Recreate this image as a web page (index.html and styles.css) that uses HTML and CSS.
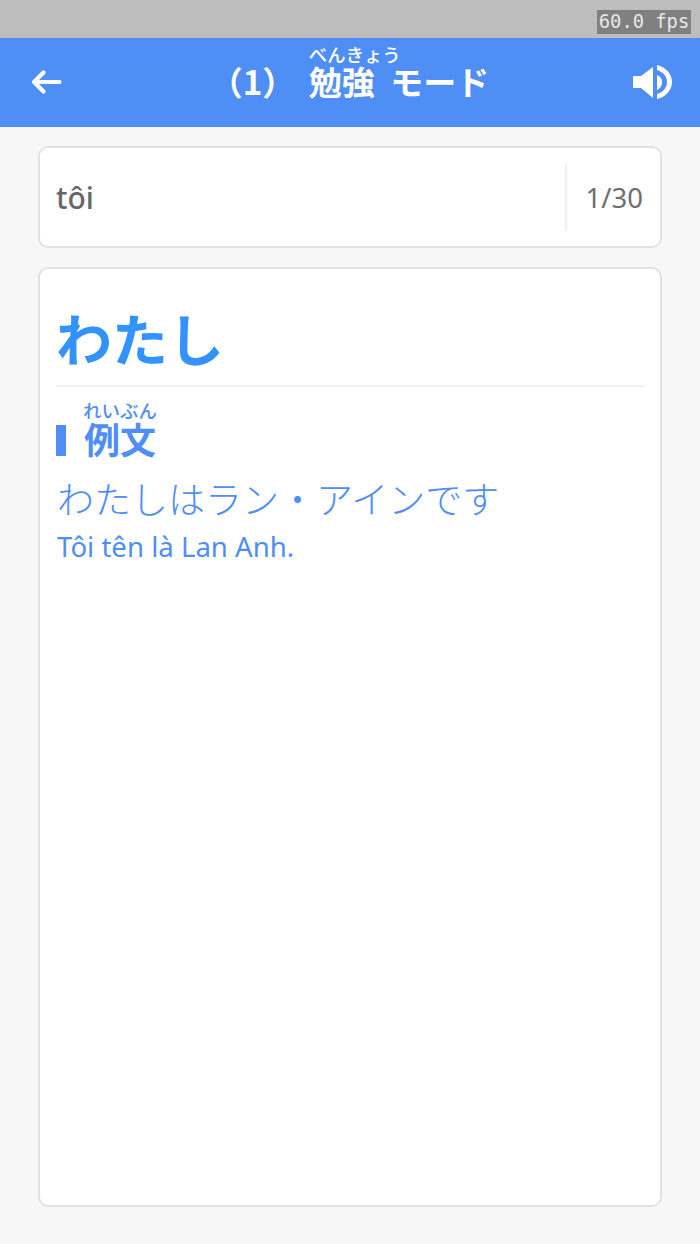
FILE: index.html
```html
<!DOCTYPE html>
<html lang="ja">
<head>
  <meta charset="UTF-8">
  <meta name="viewport" content="width=device-width, initial-scale=1.0">
  <title>勉強モード</title>
  <link rel="stylesheet" href="styles.css">
</head>
<body>

  <div class="status-bar">
    <span class="fps">60.0 fps</span>
  </div>

  <header class="header">
    <svg class="icon-back" width="31" height="26" viewBox="0 0 31 26">
      <path d="M12.5 3.5 L3 13 L12.5 22.5 M3 13 H28.5" fill="none" stroke="#fff" stroke-width="4.2" stroke-linecap="round" stroke-linejoin="round"/>
    </svg>
    <h1 class="title">（1） <ruby class="furi">勉強<rt>べんきょう</rt></ruby> モード</h1>
    <svg class="icon-sound" width="39" height="34" viewBox="0 0 39 34">
      <path d="M0 11 H8 L20 2 V33 L8 23 H0 Z" fill="#fff"/>
      <path d="M24 10 C28 12 29 14 29 17 C29 20 28 23 24 25 Z" fill="#fff"/>
      <path d="M24 0 C33 2 39 9 39 17 C39 25 33 32 24 34 V29 C30 27 34 23 34 17 C34 11 30 7 24 5 Z" fill="#fff"/>
    </svg>
  </header>

  <main class="content">
    <section class="word-card">
      <div class="word">tôi</div>
      <div class="counter">1/30</div>
    </section>

    <section class="detail-card">
      <h2 class="kana">わたし</h2>
      <h3 class="section-title"><ruby class="furi">例文<rt>れいぶん</rt></ruby></h3>
      <p class="sentence">わたしはラン・アインです</p>
      <p class="translation">Tôi tên là Lan Anh.</p>
    </section>
  </main>

</body>
</html>
```

FILE: styles.css
```css
* {
  box-sizing: border-box;
}

body {
  font-family: "Noto Sans", "Noto Sans CJK JP", sans-serif;
  background-color: #f7f7f7;
  margin: 0;
  height: 1244px;
  display: flex;
  flex-direction: column;
  overflow: hidden;
}

.status-bar {
  height: 38px;
  background-color: #bdbdbd;
  display: flex;
  justify-content: flex-end;
  align-items: flex-start;
  padding: 10px 9px 0 0;
}

.fps {
  width: 94px;
  height: 24px;
  background-color: #808080;
  color: #e8e8e8;
  font-family: "DejaVu Sans Mono", monospace;
  font-size: 18.8px;
  line-height: 23px;
  text-align: center;
  white-space: nowrap;
}

.header {
  height: 89px;
  background-color: #4f8ef5;
  display: flex;
  align-items: center;
  justify-content: space-between;
  padding: 0 28px 1px 31px;
}

.title {
  margin: -3px 0 0 4px;
  color: #fff;
  font-family: "Noto Sans CJK JP", sans-serif;
  font-size: 33px;
  font-weight: 700;
  line-height: 44px;
  white-space: nowrap;
}

/* furigana hangs over the kanji and may be wider than it */
.furi {
  display: inline-block;
  position: relative;
}

.title .furi {
  margin: 0 8px 0 6px;
}

.furi rt {
  position: absolute;
  left: 0;
  top: -15px;
  font-size: 18.4px;
  font-weight: 500;
  line-height: 20px;
  white-space: nowrap;
}

.content {
  flex: 1;
  display: flex;
  flex-direction: column;
  gap: 19px;
  padding: 19px 38px 37px;
}

.word-card,
.detail-card {
  background-color: #fff;
  border: 2px solid #e2e2e2;
  border-radius: 10px;
}

.word-card {
  height: 102px;
  display: flex;
  align-items: center;
  padding: 16px 0;
}

.word {
  flex: 1;
  padding-left: 16px;
  color: #666666;
  font-size: 30px;
  font-weight: 500;
}

.counter {
  width: 95px;
  height: 100%;
  border-left: 2px solid #f0f0f0;
  display: flex;
  align-items: center;
  justify-content: flex-end;
  padding-right: 17px;
  color: #6e6e6e;
  font-size: 27.5px;
}

.detail-card {
  flex: 1;
  padding: 0 16px;
}

.kana {
  margin: 0;
  height: 118px;
  border-bottom: 2px solid #f0f0f0;
  color: #3293ff;
  font-family: "Noto Sans CJK JP", sans-serif;
  font-size: 56px;
  font-weight: 700;
  line-height: 135px;
}

.section-title {
  margin: 38px 0 0;
  border-left: 10px solid #4f8ef5;
  padding-left: 18px;
  height: 31px;
  color: #4f8ef5;
  font-family: "Noto Sans CJK JP", sans-serif;
  font-size: 36px;
  font-weight: 700;
  line-height: 27px;
}

.section-title .furi rt {
  top: -25px;
  left: -1px;
  font-size: 18.5px;
}

.sentence {
  margin: 17px 0 0;
  color: #4f8ef5;
  font-family: "Noto Sans CJK JP", sans-serif;
  font-size: 37px;
  font-weight: 300;
  line-height: 50px;
  padding-left: 1px;
}

.translation {
  margin: 5px 0 0;
  padding-left: 1px;
  color: #4f8ef5;
  font-size: 27.6px;
  line-height: 36px;
}
```
